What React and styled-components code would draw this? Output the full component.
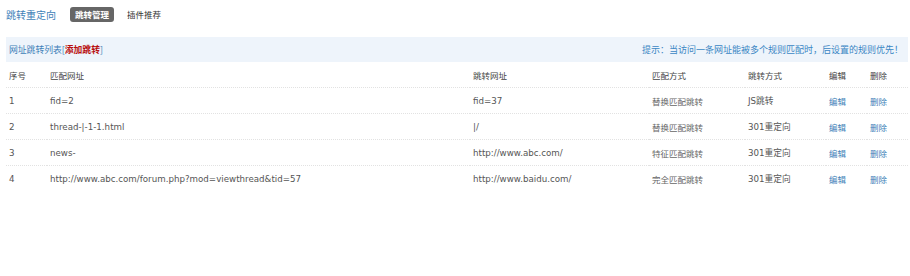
import React from 'react';
import styled, { createGlobalStyle } from 'styled-components';

const Global = createGlobalStyle`
  body {
    margin: 0;
    background: #fff;
    font-family: "DejaVu Sans", "Noto Sans CJK SC", sans-serif;
    color: #555;
  }
`;

const Page = styled.div`
  padding: 5px 2px 0 6px;
`;

const TopBar = styled.div`
  display: flex;
  align-items: center;
  height: 18px;
  gap: 8px;
`;

const Title = styled.div`
  font-family: "Noto Sans CJK SC", sans-serif;
  font-size: 10px;
  color: #3e7fb8;
  margin-right: 6px;
`;

const Tab = styled.span`
  font-family: "Noto Sans CJK SC", sans-serif;
  font-size: 8.5px;
  padding: 1px 5px;
  border-radius: 3px;
  background: ${p => (p.active ? '#666' : 'transparent')};
  color: ${p => (p.active ? '#fff' : '#333')};
  font-weight: ${p => (p.active ? 'bold' : 'normal')};
  line-height: 13px;
`;

const InfoBar = styled.div`
  margin-top: 14px;
  height: 25px;
  background: #eef4fb;
  display: flex;
  align-items: center;
  justify-content: space-between;
  padding: 0 5px 0 3px;
  font-family: "Noto Sans CJK SC", sans-serif;
  font-size: 8.8px;
  color: #3e7fb8;
`;

const Add = styled.span`
  color: #b80f0f;
  font-weight: bold;
`;

const Hint = styled.span`
  color: #3a86c4;
  font-size: 9px;
`;

const Table = styled.table`
  width: 902px;
  border-collapse: collapse;
  table-layout: fixed;
`;

const Th = styled.th`
  text-align: left;
  font-weight: normal;
  font-family: "Noto Sans CJK SC", sans-serif;
  font-size: 8.5px;
  color: #444;
  height: 25px;
  padding: 0 0 0 3px;
  border-bottom: 1px dotted #e2e2e2;
`;

const Td = styled.td`
  height: 25px;
  padding: 0 0 0 3px;
  border-bottom: ${p => (p.last ? 'none' : '1px dotted #e2e2e2')};
  color: ${p => p.color || '#555'};
  font-family: ${p => (p.cjk ? '"Noto Sans CJK SC", sans-serif' : '"DejaVu Sans", "Noto Sans CJK SC", sans-serif')};
  font-size: ${p => (p.cjk ? '8.5px' : '8.7px')};
  white-space: nowrap;
`;

const rows = [
  ['1', 'fid=2', 'fid=37', '替换匹配跳转', 'JS跳转'],
  ['2', 'thread-|-1-1.html', '|/', '替换匹配跳转', '301重定向'],
  ['3', 'news-', 'http://www.abc.com/', '特征匹配跳转', '301重定向'],
  ['4', 'http://www.abc.com/forum.php?mod=viewthread&tid=57', 'http://www.baidu.com/', '完全匹配跳转', '301重定向'],
];

const widths = [41, 423, 179, 96, 81, 41, 41];

export default function App() {
  return (
    <Page>
      <Global />
      <TopBar>
        <Title>跳转重定向</Title>
        <Tab active>跳转管理</Tab>
        <Tab>插件推荐</Tab>
      </TopBar>
      <InfoBar>
        <span>网址跳转列表[<Add>添加跳转</Add>]</span>
        <Hint>提示：当访问一条网址能被多个规则匹配时，后设置的规则优先！</Hint>
      </InfoBar>
      <Table>
        <colgroup>
          {widths.map((w, i) => <col key={i} style={{ width: w }} />)}
        </colgroup>
        <thead>
          <tr>
            <Th>序号</Th>
            <Th>匹配网址</Th>
            <Th>跳转网址</Th>
            <Th>匹配方式</Th>
            <Th>跳转方式</Th>
            <Th>编辑</Th>
            <Th>删除</Th>
          </tr>
        </thead>
        <tbody>
          {rows.map((r, i) => {
            const last = i === rows.length - 1;
            return (
              <tr key={r[0]}>
                <Td last={last}>{r[0]}</Td>
                <Td last={last}>{r[1]}</Td>
                <Td last={last}>{r[2]}</Td>
                <Td last={last} cjk color="#666">{r[3]}</Td>
                <Td last={last} color="#555">{r[4]}</Td>
                <Td last={last} cjk color="#3e7fb8">编辑</Td>
                <Td last={last} cjk color="#3e7fb8">删除</Td>
              </tr>
            );
          })}
        </tbody>
      </Table>
    </Page>
  );
}
